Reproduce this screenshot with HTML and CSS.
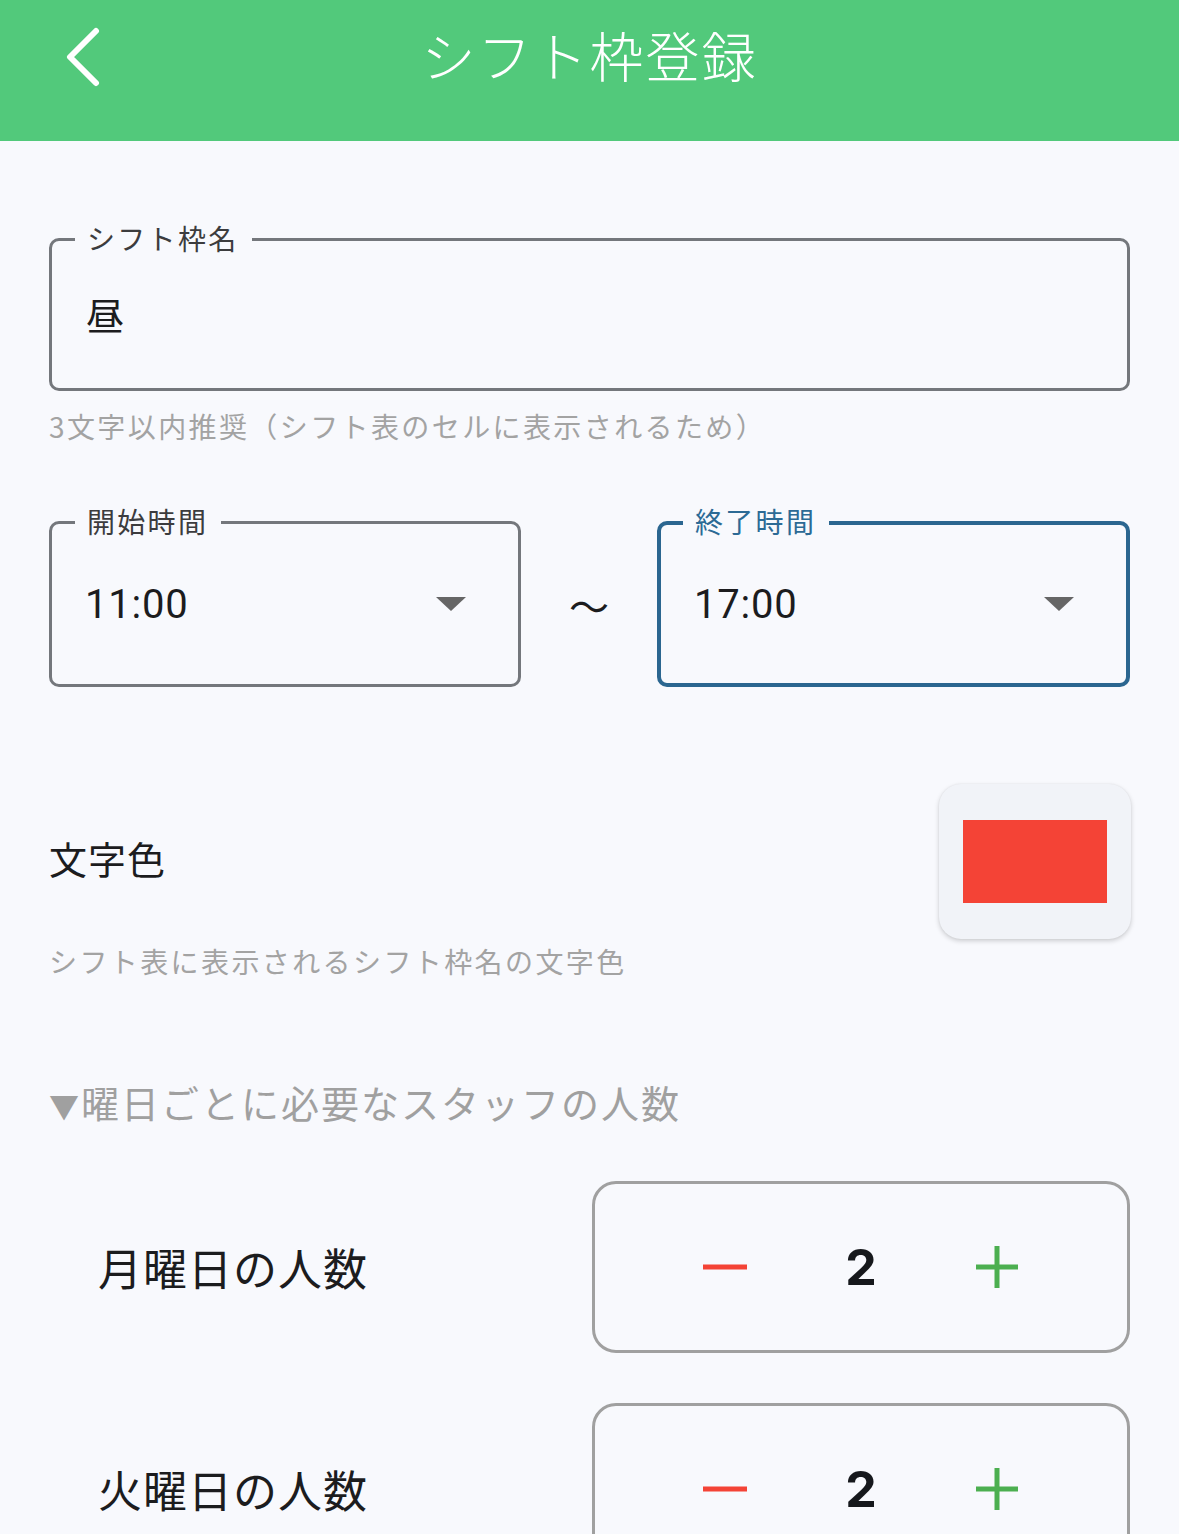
FILE: index.html
```html
<!DOCTYPE html>
<html lang="ja">
<head>
<meta charset="utf-8">
<title>シフト枠登録</title>
<link rel="stylesheet" href="styles.css">
</head>
<body>
<header class="appbar">
  <button class="back" aria-label="戻る">
    <svg width="40" height="60" viewBox="0 0 40 60"><polyline points="32,4 6,30 32,56" fill="none" stroke="#fff" stroke-width="6" stroke-linecap="round" stroke-linejoin="round"/></svg>
  </button>
  <h1 class="title">シフト枠登録</h1>
</header>

<main class="content">
  <div class="outlined name-field">
    <span class="outlined-label">シフト枠名</span>
    <span class="value">昼</span>
  </div>
  <p class="helper helper-name">3文字以内推奨（シフト表のセルに表示されるため）</p>

  <div class="time-row">
    <div class="outlined time-field">
      <span class="outlined-label">開始時間</span>
      <span class="value num">11:00</span>
      <svg class="caret" width="30" height="14" viewBox="0 0 30 14"><polygon points="0,0 30,0 15,14" fill="#666"/></svg>
    </div>
    <span class="tilde">〜</span>
    <div class="outlined time-field focused">
      <span class="outlined-label">終了時間</span>
      <span class="value num">17:00</span>
      <svg class="caret" width="30" height="14" viewBox="0 0 30 14"><polygon points="0,0 30,0 15,14" fill="#666"/></svg>
    </div>
  </div>

  <div class="color-row">
    <span class="color-label">文字色</span>
    <div class="swatch-card"><div class="swatch"></div></div>
  </div>
  <p class="helper helper-color">シフト表に表示されるシフト枠名の文字色</p>

  <h2 class="section"><span class="tri">▼</span>曜日ごとに必要なスタッフの人数</h2>

  <div class="counter-row">
    <span class="counter-label">月曜日の人数</span>
    <div class="stepper">
      <span class="step"><svg width="44" height="6" viewBox="0 0 44 6"><rect width="44" height="5" y="0.5" fill="#F44336"/></svg></span>
      <span class="step count">2</span>
      <span class="step"><svg width="42" height="42" viewBox="0 0 42 42"><rect x="18.5" width="5" height="42" fill="#4CAF50"/><rect y="18.5" width="42" height="5" fill="#4CAF50"/></svg></span>
    </div>
  </div>

  <div class="counter-row">
    <span class="counter-label">火曜日の人数</span>
    <div class="stepper">
      <span class="step"><svg width="44" height="6" viewBox="0 0 44 6"><rect width="44" height="5" y="0.5" fill="#F44336"/></svg></span>
      <span class="step count">2</span>
      <span class="step"><svg width="42" height="42" viewBox="0 0 42 42"><rect x="18.5" width="5" height="42" fill="#4CAF50"/><rect y="18.5" width="42" height="5" fill="#4CAF50"/></svg></span>
    </div>
  </div>
</main>
</body>
</html>
```

FILE: styles.css
```css
* { box-sizing: border-box; }

html, body {
  margin: 0;
  padding: 0;
  background: #F8F9FD;
  font-family: "Noto Sans CJK JP", "Noto Sans", sans-serif;
  color: #1c1c1e;
}

body { height: 1534px; overflow: hidden; }

.appbar {
  height: 141px;
  background: #52C97B;
  display: flex;
  align-items: center;
  justify-content: center;
  position: relative;
}

.back {
  position: absolute;
  left: 64px;
  top: 27px;
  width: 40px;
  height: 60px;
  padding: 0;
  border: 0;
  background: none;
}

.back svg { display: block; }

.title {
  margin: 0 0 31px 0;
  font-size: 54px;
  font-weight: 300;
  color: #fff;
  letter-spacing: 2px;
  line-height: 1;
}

.content {
  padding: 97px 49px 0 49px;
}

.outlined {
  position: relative;
  border: 3px solid #74777C;
  border-radius: 10px;
  display: flex;
  align-items: center;
}

.outlined-label {
  position: absolute;
  top: -20px;
  left: 23px;
  padding: 0 13px 0 12px;
  background: #F8F9FD;
  font-size: 28px;
  line-height: 34px;
  letter-spacing: 2.3px;
  color: #3c3c3e;
}

.value {
  font-size: 38px;
  line-height: 1;
  color: #1c1c1e;
}

.name-field {
  height: 153px;
  padding: 0 0 2px 34px;
}

.helper {
  margin: 0;
  font-size: 28px;
  line-height: 40px;
  letter-spacing: 2.4px;
  color: #A3A3A3;
}

.helper-name { margin-top: 15px; }

.time-row {
  margin-top: 75px;
  display: grid;
  grid-template-columns: 472px 136px 473px;
  align-items: center;
}

.time-field {
  height: 166px;
  padding: 0 52px 0 33px;
  justify-content: space-between;
}

.time-field .value {
  font-family: Roboto, "Noto Sans CJK JP", sans-serif;
  font-size: 40px;
  letter-spacing: 0.8px;
  padding-top: 2px;
}

.time-field.focused {
  border: 4px solid #2B6690;
  padding: 0 52px 0 33px;
}

.time-field.focused .outlined-label {
  color: #2C6A95;
  top: -21px;
  left: 22px;
}

.caret { display: block; }

.tilde {
  text-align: center;
  font-size: 40px;
  line-height: 1;
  color: #1c1c1e;
  padding-top: 2px;
}

.color-row {
  margin-top: 97px;
  display: flex;
  align-items: center;
  justify-content: space-between;
}

.color-label {
  font-size: 38px;
  line-height: 1;
  letter-spacing: 1px;
  margin-top: -8px;
}

.swatch-card {
  width: 192px;
  height: 155px;
  margin-right: -1px;
  border-radius: 22px;
  background: #F1F3F8;
  box-shadow: 0 2px 5px rgba(0, 0, 0, 0.18), 0 0 2px rgba(0, 0, 0, 0.06);
  display: flex;
  align-items: center;
  justify-content: center;
}

.swatch {
  width: 144px;
  height: 83px;
  background: #F44336;
}

.helper-color { margin-top: 2px; }

.section {
  margin: 96px 0 0 0;
  height: 50px;
  font-size: 38px;
  font-weight: 400;
  line-height: 50px;
  letter-spacing: 2px;
  color: #A0A0A0;
}

.tri {
  font-size: 30px;
  line-height: 0;
  letter-spacing: 2px;
}

.counter-row {
  margin-top: 54px;
  display: flex;
  align-items: center;
  justify-content: space-between;
}

.counter-row + .counter-row { margin-top: 50px; }

.counter-label {
  padding-left: 49px;
  font-size: 44px;
  line-height: 1;
  letter-spacing: 1px;
  color: #1c1c1e;
}

.stepper {
  width: 538px;
  height: 172px;
  border: 3px solid #A0A0A0;
  border-radius: 24px;
  display: flex;
  align-items: center;
  justify-content: center;
}

.step {
  width: 136px;
  display: flex;
  justify-content: center;
  align-items: center;
}

.step svg { display: block; }

.count {
  font-family: Inter, "Liberation Sans", sans-serif;
  font-weight: 700;
  font-size: 50px;
  line-height: 1;
  color: #16181C;
}
```
